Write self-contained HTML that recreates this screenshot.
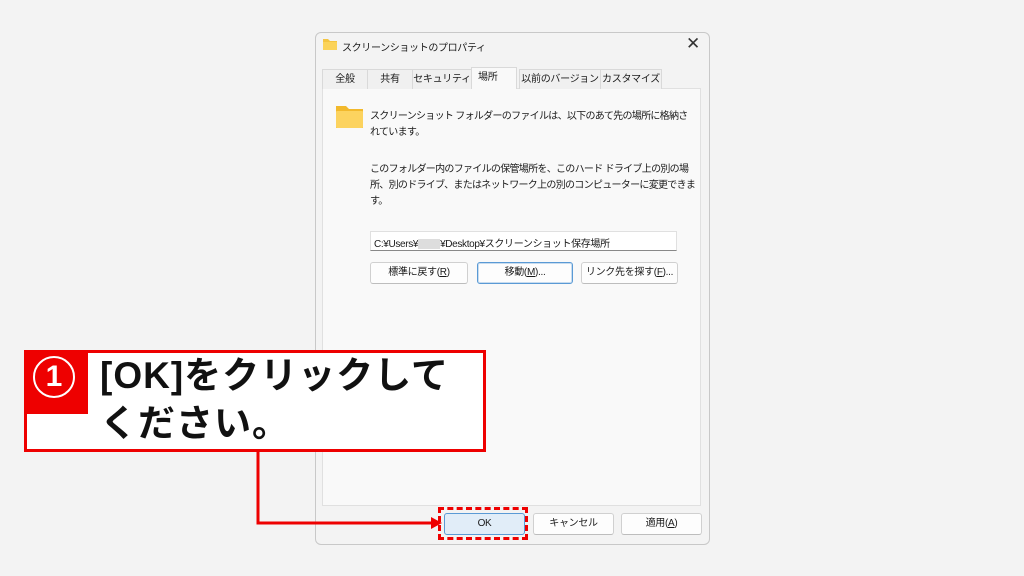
<!DOCTYPE html>
<html><head><meta charset="utf-8"><style>
body{margin:0;width:1024px;height:576px;background:#f3f3f3;position:relative;overflow:hidden;font-family:"Liberation Sans","Noto Sans CJK JP",sans-serif;color:#1a1a1a}
.a{position:absolute}
.dlg{left:315px;top:32px;width:393px;height:511px;border:1px solid #c8c8c8;border-radius:6px;background:#f3f3f3}
.t{font-size:10px;letter-spacing:-0.35px;white-space:nowrap}
.p{font-size:10px;letter-spacing:-0.7px;white-space:nowrap}
.tab{position:absolute;top:69px;height:19px;border:1px solid #d9d9d9;border-bottom:none;background:#f0f0f0;font-size:10px;letter-spacing:-0.3px;line-height:19px;text-align:center;white-space:nowrap;overflow:hidden}
.btn{position:absolute;background:#fdfdfd;border:1px solid #d0d0d0;border-bottom-color:#bdbdbd;border-radius:3px;font-size:10px;letter-spacing:-0.3px;text-align:center;line-height:20px;height:20px;white-space:nowrap}
</style></head><body>
<div class="a dlg"></div>
<svg class="a" style="left:323px;top:38px" width="14" height="12"><path d="M0 1h5l2 2h7v9H0z" fill="#f4c542"/><rect x="0" y="4" width="14" height="8" fill="#fbd35a"/></svg>
<div class="a t" style="left:342px;top:39px">スクリーンショットのプロパティ</div>
<div class="a" style="left:686px;top:34px;font-size:17px;color:#333">✕</div>
<div class="a" style="left:322px;top:88px;width:377px;height:416px;background:#f9f9f9;border:1px solid #e0e0e0"></div>
<div class="tab" style="left:322px;width:44px">全般</div>
<div class="tab" style="left:367px;width:44px">共有</div>
<div class="tab" style="left:412px;width:58px">セキュリティ</div>
<div class="tab" style="left:471px;top:67px;height:22px;width:46px;background:#f9f9f9;text-align:left;padding-left:6px;box-sizing:border-box">場所</div>
<div class="tab" style="left:519px;width:80px">以前のバージョン</div>
<div class="tab" style="left:600px;width:60px">カスタマイズ</div>
<svg class="a" style="left:336px;top:105px" width="27" height="23"><path d="M0 1h10l3 3h14v19H0z" fill="#f2b92c"/><rect x="0" y="6" width="27" height="17" rx="1" fill="#fcd35f"/></svg>
<div class="a p" style="left:370px;top:109px;line-height:16px">スクリーンショット フォルダーのファイルは、以下のあて先の場所に格納さ<br>れています。</div>
<div class="a p" style="left:370px;top:162px;line-height:16px">このフォルダー内のファイルの保管場所を、このハード ドライブ上の別の場<br>所、別のドライブ、またはネットワーク上の別のコンピューターに変更できま<br>す。</div>
<div class="a" style="left:370px;top:231px;width:307px;height:20px;background:#fff;border:1px solid #e0e0e0;border-bottom:1px solid #888;box-sizing:border-box"></div>
<div class="a t" style="left:374px;top:235px">C:¥Users¥<span style="display:inline-block;width:22px;height:10px;background:#ddd;vertical-align:middle"></span>¥Desktop¥スクリーンショット保存場所</div>
<div class="btn" style="left:370px;top:262px;width:96px">標準に戻す(<u>R</u>)</div>
<div class="btn" style="left:477px;top:262px;width:94px;border:1px solid #5a9ad5;box-shadow:inset 0 0 0 1px #c8dcef">移動(<u>M</u>)...</div>
<div class="btn" style="left:581px;top:262px;width:95px">リンク先を探す(<u>F</u>)...</div>
<div class="btn" style="left:444px;top:513px;width:79px;background:#e1edf8;border-color:#5a9ad5">OK</div>
<div class="btn" style="left:533px;top:513px;width:79px">キャンセル</div>
<div class="btn" style="left:621px;top:513px;width:79px">適用(<u>A</u>)</div>
<div class="a" style="left:438px;top:507px;width:84px;height:27px;border:3px dashed #e00"></div>
<svg class="a" style="left:0;top:0" width="1024" height="576"><path d="M258 452V523H433" fill="none" stroke="#e00" stroke-width="3"/><path d="M442 523l-11-6v12z" fill="#e00"/></svg>
<div class="a" style="left:24px;top:350px;width:456px;height:96px;border:3px solid #e00;background:#fff"></div>
<div class="a" style="left:24px;top:350px;width:64px;height:64px;background:#e00"></div>
<div class="a" style="left:33px;top:356px;width:38px;height:38px;border:2px solid #fff;border-radius:50%;color:#fff;font-size:30px;font-weight:bold;text-align:center;line-height:38px">1</div>
<div class="a" style="left:100px;top:352px;font-size:37px;letter-spacing:1px;font-weight:bold;line-height:48px;color:#111;white-space:nowrap">[OK]をクリックして<br>ください。</div>
</body></html>
